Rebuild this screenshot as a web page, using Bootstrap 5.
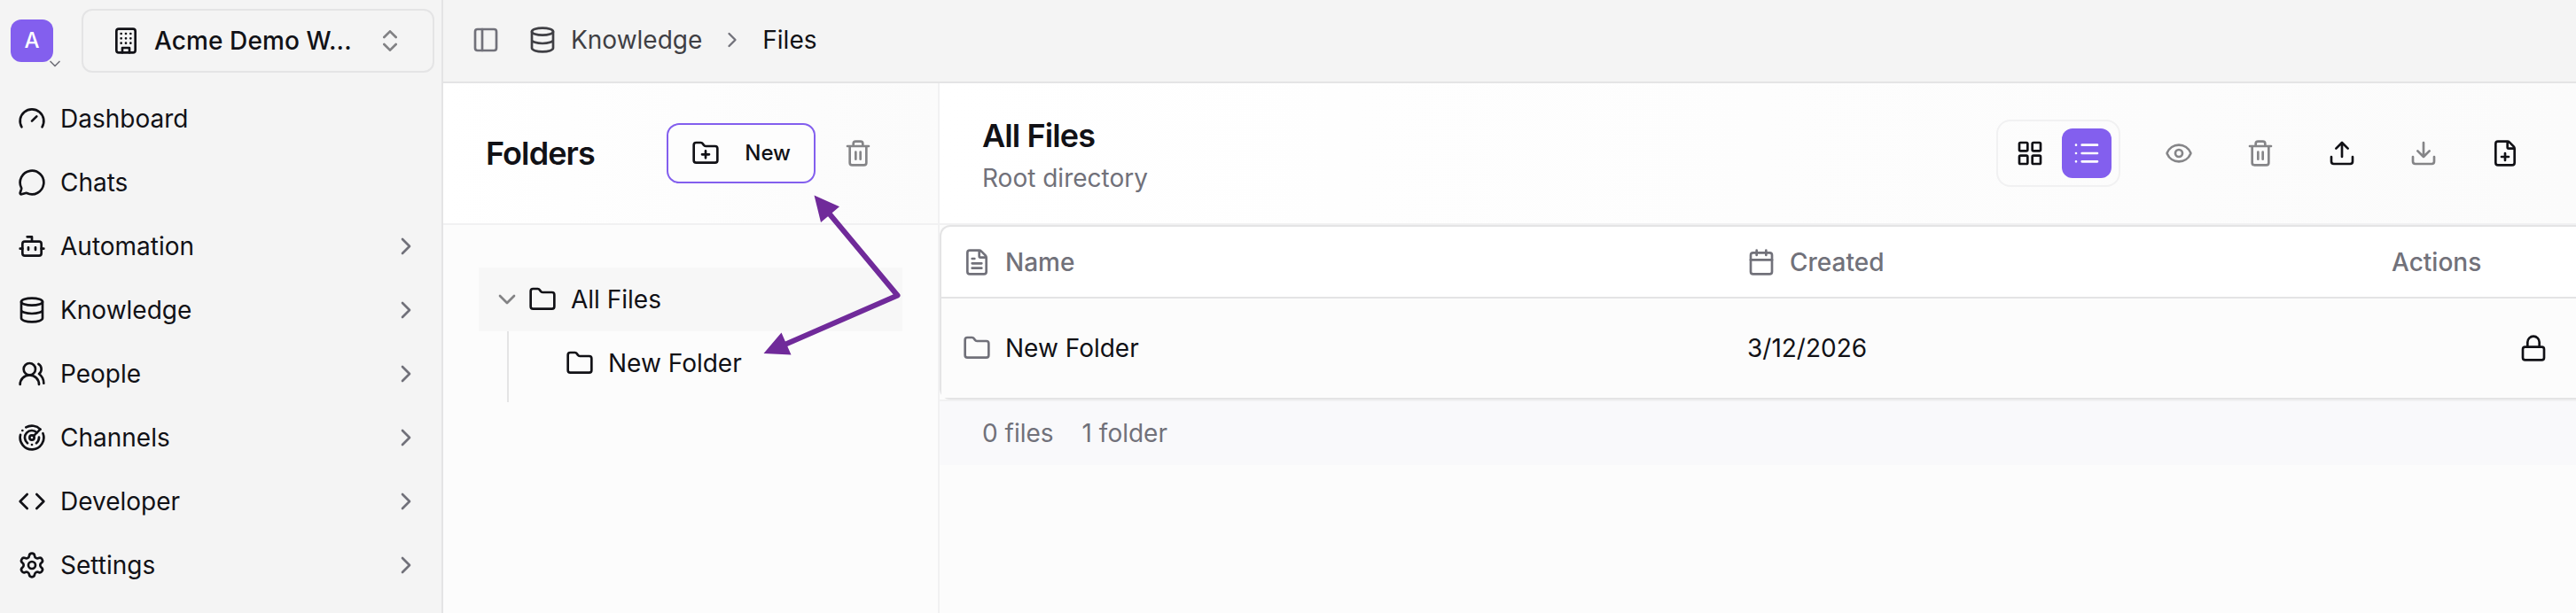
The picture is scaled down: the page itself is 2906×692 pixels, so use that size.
<!DOCTYPE html>
<html lang="en">
<head>
<meta charset="utf-8">
<meta name="viewport" content="width=device-width, initial-scale=1">
<title>Files</title>
<link href="https://cdn.jsdelivr.net/npm/bootstrap@5.3.0/dist/css/bootstrap.min.css" rel="stylesheet">
<style>
  :root { --ink:#111116; --soft:#71717a; --line:#e4e4e5; --faint:#f1f1f2; --accent:#835fee; }
  body { font-family: Inter, "Liberation Sans", sans-serif; font-size: 28px; line-height: 40px; color: var(--ink); background: #fcfcfc; }
  .ico { width: 32px; height: 32px; flex: none; display: block; fill: none; stroke: currentColor; stroke-width: 2; stroke-linecap: round; stroke-linejoin: round; }
  .ink-soft { color: var(--soft); }
  .dim { opacity: .5; }
  .side { width: 500px; background: #f4f4f4; border-right: 2px solid var(--line); }
  .side-top { padding: 10px 8px 0 12px; height: 98px; }
  .avatar { width: 48px; height: 48px; border-radius: 12px; background: var(--accent); color: #fff; font-size: 24px; font-weight: 500; margin: 12px 32px 0 0; }
  .avatar .ico { position: absolute; left: 40px; top: 40px; width: 20px; height: 20px; color: var(--soft); }
  .space-btn { width: 398px; height: 72px; border: 2px solid var(--line); border-radius: 12px; padding: 0 32px; font-weight: 500; letter-spacing: .1px; }
  .side-link { height: 72px; padding: 0 24px 0 20px; gap: 16px; color: inherit; text-decoration: none; }
  .topbar { height: 94px; padding: 0 32px 2px; background: #f4f4f4; border-bottom: 2px solid var(--line); }
  .folders { width: 560px; border-right: 2px solid var(--faint); }
  .bar { height: 160px; border-bottom: 2px solid var(--faint); background: linear-gradient(to right, #fff, #fbfbfb); padding: 0 48px; }
  .heading { font-size: 36px; line-height: 48px; font-weight: 600; letter-spacing: -.9px; margin: 0; }
  .new-btn { width: 168px; height: 68px; border: 2px solid var(--accent); border-radius: 14px; padding: 0 26px; font-size: 24px; font-weight: 500; background: #fdfdfd; }
  .tree { padding: 48px 40px 0; }
  .tree-row { height: 72px; padding-left: 16px; gap: 8px; }
  .tree-row.active { background: #f7f7f7; }
  .branch { margin-left: 32px; height: 80px; border-left: 2px solid var(--line); padding-left: 64px; }
  .branch .tree-row { padding-left: 0; }
  .tree-row span { margin-left: 8px; }
  .views { width: 140px; height: 76px; border: 2px solid var(--faint); border-radius: 16px; padding: 8px; gap: 8px; margin-right: 50px; }
  .view { width: 56px; height: 56px; border-radius: 12px; }
  .view.active { background: var(--accent); color: #fff; }
  .tools { gap: 60px; }
  .sheet { border: 2px solid var(--line); border-right: 0; border-radius: 12px 0 0 12px; background: #fff; }
  .files { table-layout: fixed; border-collapse: separate; border-spacing: 0; margin: 0; --bs-table-bg: transparent; color: inherit; }
  .files th, .files td { padding: 0 0 0 24px; border: 0; vertical-align: middle; color: inherit; background: none; box-shadow: none; }
  .files thead th { height: 81px; font-weight: 500; color: var(--soft); border-bottom: 2px solid var(--line); }
  .files tbody td { height: 112px; background: #fcfcfc; }
  .totals { height: 74px; border-top: 2px solid var(--faint); background: #f9f9fb; padding: 0 48px; gap: 32px; }
  .arrows { position: absolute; left: 850px; top: 210px; }
</style>
</head>
<body>
<svg class="d-none">
  <symbol id="gauge" viewBox="0 0 24 24"><path d="m12 14 4-4M3.34 19a10 10 0 1 1 17.32 0"/></symbol>
  <symbol id="chat" viewBox="0 0 24 24"><path d="M2.992 16.342a2 2 0 0 1 .094 1.167l-1.065 3.29a1 1 0 0 0 1.236 1.168l3.413-.998a2 2 0 0 1 1.099.092 10 10 0 1 0-4.777-4.719"/></symbol>
  <symbol id="bot" viewBox="0 0 24 24"><path d="M12 8V4H8"/><rect width="16" height="12" x="4" y="8" rx="2"/><path d="M2 14h2M20 14h2M15 13v2M9 13v2"/></symbol>
  <symbol id="database" viewBox="0 0 24 24"><ellipse cx="12" cy="5" rx="9" ry="3"/><path d="M3 5V19A9 3 0 0 0 21 19V5M3 12A9 3 0 0 0 21 12"/></symbol>
  <symbol id="users" viewBox="0 0 24 24"><path d="M18 21a8 8 0 0 0-16 0"/><circle cx="10" cy="8" r="5"/><path d="M22 20c0-3.37-2-6.5-4-8a5 5 0 0 0-.45-8.3"/></symbol>
  <symbol id="radar" viewBox="0 0 24 24"><path d="M19.07 4.93A10 10 0 0 0 6.99 3.34M4 6h.01M2.29 9.62A10 10 0 1 0 21.31 8.35M16.24 7.76A6 6 0 1 0 8.23 16.67M12 18h.01M17.99 11.66A6 6 0 0 1 15.77 16.67"/><circle cx="12" cy="12" r="2"/><path d="m13.41 10.59 5.66-5.66"/></symbol>
  <symbol id="code" viewBox="0 0 24 24"><path d="m16 18 6-6-6-6M8 6l-6 6 6 6"/></symbol>
  <symbol id="gear" viewBox="0 0 24 24"><path d="M9.671 4.136a2.34 2.34 0 0 1 4.659 0 2.34 2.34 0 0 0 3.319 1.915 2.34 2.34 0 0 1 2.33 4.033 2.34 2.34 0 0 0 0 3.831 2.34 2.34 0 0 1-2.33 4.033 2.34 2.34 0 0 0-3.319 1.915 2.34 2.34 0 0 1-4.659 0 2.34 2.34 0 0 0-3.32-1.915 2.34 2.34 0 0 1-2.33-4.033 2.34 2.34 0 0 0 0-3.831A2.34 2.34 0 0 1 6.35 6.051a2.34 2.34 0 0 0 3.319-1.915"/><circle cx="12" cy="12" r="3"/></symbol>
  <symbol id="building" viewBox="0 0 24 24"><rect width="16" height="20" x="4" y="2" rx="2"/><path d="M9 22v-4h6v4M8 6h.01M16 6h.01M12 6h.01M12 10h.01M12 14h.01M16 10h.01M16 14h.01M8 10h.01M8 14h.01"/></symbol>
  <symbol id="updown" viewBox="0 0 24 24"><path d="m7 15 5 5 5-5M7 9l5-5 5 5"/></symbol>
  <symbol id="right" viewBox="0 0 24 24"><path d="m9 18 6-6-6-6"/></symbol>
  <symbol id="down" viewBox="0 0 24 24"><path d="m6 9 6 6 6-6"/></symbol>
  <symbol id="panel" viewBox="0 0 24 24"><rect width="18" height="18" x="3" y="3" rx="2"/><path d="M9 3v18"/></symbol>
  <symbol id="folder" viewBox="0 0 24 24"><path d="M20 20a2 2 0 0 0 2-2V8a2 2 0 0 0-2-2h-7.9a2 2 0 0 1-1.69-.9L9.6 3.9A2 2 0 0 0 7.93 3H4a2 2 0 0 0-2 2v13a2 2 0 0 0 2 2Z"/></symbol>
  <symbol id="folder-plus" viewBox="0 0 24 24"><path d="M12 10v6M9 13h6M20 20a2 2 0 0 0 2-2V8a2 2 0 0 0-2-2h-7.9a2 2 0 0 1-1.69-.9L9.6 3.9A2 2 0 0 0 7.93 3H4a2 2 0 0 0-2 2v13a2 2 0 0 0 2 2Z"/></symbol>
  <symbol id="trash" viewBox="0 0 24 24"><path d="M10 11v6M14 11v6M19 6v14a2 2 0 0 1-2 2H7a2 2 0 0 1-2-2V6M3 6h18M8 6V4a2 2 0 0 1 2-2h4a2 2 0 0 1 2 2v2"/></symbol>
  <symbol id="grid" viewBox="0 0 24 24"><rect width="7" height="7" x="3" y="3" rx="1"/><rect width="7" height="7" x="14" y="3" rx="1"/><rect width="7" height="7" x="14" y="14" rx="1"/><rect width="7" height="7" x="3" y="14" rx="1"/></symbol>
  <symbol id="list" viewBox="0 0 24 24"><path d="M3 5h.01M3 12h.01M3 19h.01M8 5h13M8 12h13M8 19h13"/></symbol>
  <symbol id="eye" viewBox="0 0 24 24"><path d="M2.062 12.348a1 1 0 0 1 0-.696 10.75 10.75 0 0 1 19.876 0 1 1 0 0 1 0 .696 10.75 10.75 0 0 1-19.876 0"/><circle cx="12" cy="12" r="3"/></symbol>
  <symbol id="upload" viewBox="0 0 24 24"><path d="M12 3v12M17 8l-5-5-5 5M21 15v4a2 2 0 0 1-2 2H5a2 2 0 0 1-2-2v-4"/></symbol>
  <symbol id="download" viewBox="0 0 24 24"><path d="M12 15V3M21 15v4a2 2 0 0 1-2 2H5a2 2 0 0 1-2-2v-4M7 10l5 5 5-5"/></symbol>
  <symbol id="file-plus" viewBox="0 0 24 24"><path d="M6 22a2 2 0 0 1-2-2V4a2 2 0 0 1 2-2h8a2.4 2.4 0 0 1 1.704.706l3.588 3.588A2.4 2.4 0 0 1 20 8v12a2 2 0 0 1-2 2zM14 2v5a1 1 0 0 0 1 1h5M9 15h6M12 18v-6"/></symbol>
  <symbol id="file-text" viewBox="0 0 24 24"><path d="M6 22a2 2 0 0 1-2-2V4a2 2 0 0 1 2-2h8a2.4 2.4 0 0 1 1.704.706l3.588 3.588A2.4 2.4 0 0 1 20 8v12a2 2 0 0 1-2 2zM14 2v5a1 1 0 0 0 1 1h5M10 9H8M16 13H8M16 17H8"/></symbol>
  <symbol id="calendar" viewBox="0 0 24 24"><path d="M8 2v4M16 2v4"/><rect width="18" height="18" x="3" y="4" rx="2"/><path d="M3 10h18"/></symbol>
  <symbol id="lock" viewBox="0 0 24 24"><rect width="18" height="11" x="3" y="11" rx="2"/><path d="M7 11V7a5 5 0 0 1 10 0v4"/></symbol>
</svg>

<div class="d-flex vh-100 overflow-hidden position-relative">
  <aside class="side d-flex flex-column flex-shrink-0">
    <div class="side-top d-flex align-items-start">
      <div class="avatar position-relative d-flex align-items-center justify-content-center flex-shrink-0">A<svg class="ico"><use href="#down"/></svg></div>
      <div class="space-btn d-flex align-items-center flex-shrink-0">
        <svg class="ico me-3"><use href="#building"/></svg><span class="text-nowrap">Acme Demo W...</span><svg class="ico dim ms-auto"><use href="#updown"/></svg>
      </div>
    </div>
    <nav class="d-flex flex-column">
      <a class="side-link d-flex align-items-center"><svg class="ico"><use href="#gauge"/></svg>Dashboard</a>
      <a class="side-link d-flex align-items-center"><svg class="ico"><use href="#chat"/></svg>Chats</a>
      <a class="side-link d-flex align-items-center"><svg class="ico"><use href="#bot"/></svg>Automation<svg class="ico ink-soft ms-auto"><use href="#right"/></svg></a>
      <a class="side-link d-flex align-items-center"><svg class="ico"><use href="#database"/></svg>Knowledge<svg class="ico ink-soft ms-auto"><use href="#right"/></svg></a>
      <a class="side-link d-flex align-items-center"><svg class="ico"><use href="#users"/></svg>People<svg class="ico ink-soft ms-auto"><use href="#right"/></svg></a>
      <a class="side-link d-flex align-items-center"><svg class="ico"><use href="#radar"/></svg>Channels<svg class="ico ink-soft ms-auto"><use href="#right"/></svg></a>
      <a class="side-link d-flex align-items-center"><svg class="ico"><use href="#code"/></svg>Developer<svg class="ico ink-soft ms-auto"><use href="#right"/></svg></a>
      <a class="side-link d-flex align-items-center"><svg class="ico"><use href="#gear"/></svg>Settings<svg class="ico ink-soft ms-auto"><use href="#right"/></svg></a>
    </nav>
  </aside>

  <div class="d-flex flex-column flex-grow-1">
    <header class="topbar d-flex align-items-center flex-shrink-0">
      <svg class="ico ink-soft" style="margin-right:32px"><use href="#panel"/></svg>
      <div class="d-flex align-items-center" style="color:#3f3f44"><svg class="ico me-3"><use href="#database"/></svg>Knowledge</div>
      <svg class="ico ink-soft" style="width:28px;height:28px;margin:0 20px"><use href="#right"/></svg>
      <span>Files</span>
    </header>

    <div class="d-flex flex-grow-1">
      <section class="folders flex-shrink-0">
        <div class="bar d-flex align-items-center">
          <h2 class="heading me-auto">Folders</h2>
          <div class="new-btn d-flex align-items-center justify-content-between"><svg class="ico"><use href="#folder-plus"/></svg>New</div>
          <svg class="ico dim" style="margin:0 26px 0 32px"><use href="#trash"/></svg>
        </div>
        <div class="tree">
          <div class="tree-row active d-flex align-items-center"><svg class="ico dim"><use href="#down"/></svg><svg class="ico"><use href="#folder"/></svg><span>All Files</span></div>
          <div class="branch"><div class="tree-row d-flex align-items-center"><svg class="ico"><use href="#folder"/></svg><span>New Folder</span></div></div>
        </div>
      </section>

      <main class="flex-grow-1">
        <div class="bar d-flex align-items-center" style="padding-right:64px">
          <div class="me-auto" style="padding-top:4px">
            <h1 class="heading">All Files</h1>
            <div class="ink-soft" style="margin-top:4px">Root directory</div>
          </div>
          <div class="views d-flex">
            <div class="view d-flex align-items-center justify-content-center"><svg class="ico"><use href="#grid"/></svg></div>
            <div class="view active d-flex align-items-center justify-content-center"><svg class="ico"><use href="#list"/></svg></div>
          </div>
          <div class="tools d-flex align-items-center">
            <svg class="ico dim"><use href="#eye"/></svg>
            <svg class="ico dim"><use href="#trash"/></svg>
            <svg class="ico"><use href="#upload"/></svg>
            <svg class="ico dim"><use href="#download"/></svg>
            <svg class="ico"><use href="#file-plus"/></svg>
          </div>
        </div>
        <div class="sheet">
          <table class="table files">
            <colgroup><col style="width:885px"><col style="width:727px"><col style="width:232px"></colgroup>
            <thead><tr>
              <th><div class="d-flex align-items-center gap-3"><svg class="ico"><use href="#file-text"/></svg>Name</div></th>
              <th><div class="d-flex align-items-center gap-3"><svg class="ico"><use href="#calendar"/></svg>Created</div></th>
              <th>Actions</th>
            </tr></thead>
            <tbody><tr>
              <td><div class="d-flex align-items-center gap-3"><svg class="ico ink-soft"><use href="#folder"/></svg>New Folder</div></td>
              <td>3/12/2026</td>
              <td><svg class="ico ms-auto" style="margin-right:32px"><use href="#lock"/></svg></td>
            </tr></tbody>
          </table>
        </div>
        <div class="totals d-flex align-items-center ink-soft"><span>0 files</span><span>1 folder</span></div>
      </main>
    </div>
  </div>

  <!-- callout arrows over the page -->
  <svg class="arrows" width="180" height="200" fill="#702a9a">
    <path d="M82 27 162.500 123.500 33 180" fill="none" stroke="#702a9a" stroke-width="6" stroke-linejoin="round"/>
    <path d="M68.500 10.500 97 23.300 76 41ZM11.500 189 31.500 165.500 42.500 190.500Z"/>
  </svg>
</div>
<script src="https://cdn.jsdelivr.net/npm/bootstrap@5.3.0/dist/js/bootstrap.bundle.min.js"></script>
</body>
</html>
